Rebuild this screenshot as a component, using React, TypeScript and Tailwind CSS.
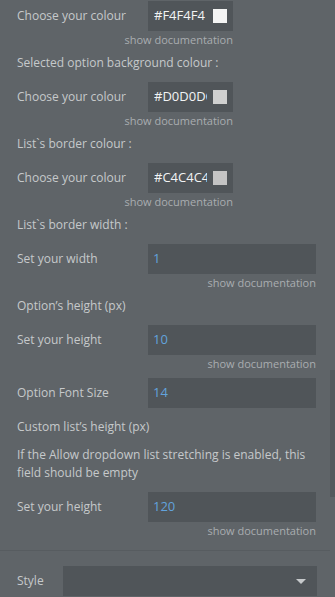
import React from 'react';

type Row = { label: string; value: string };

const Doc: React.FC = () => (
  <div className="h-[18px] text-right text-[11px] leading-[18px] text-[#a9adb0]">show documentation</div>
);

const ColourField: React.FC<{ label: string; hex: string; swatch: string }> = ({ label, hex, swatch }) => (
  <div className="w-[233px]">
    <div className="flex h-[30px] items-center">
      <div className="w-[148px] pl-[17px] text-[12px] text-[#c6c9cb]">{label}</div>
      <div className="flex h-[30px] w-[85px] items-center bg-[#505559] pl-[6px]">
        <div className="w-[53px] overflow-hidden whitespace-nowrap text-[13px] text-[#f2f3f4]">{hex}</div>
        <div className={`ml-[6px] h-[14px] w-[14px] ${swatch}`} />
      </div>
    </div>
    <Doc />
  </div>
);

const NumberField: React.FC<Row & { doc?: boolean }> = ({ label, value, doc = true }) => (
  <div className="w-[316px]">
    <div className="flex h-[30px] items-center">
      <div className="w-[148px] pl-[17px] text-[12px] text-[#c6c9cb]">{label}</div>
      <div className="flex h-[30px] flex-1 items-center bg-[#505559] pl-[5px] text-[13px] text-[#62a3dc]">
        {value}
      </div>
    </div>
    {doc && <Doc />}
  </div>
);

const Heading: React.FC<{ children: React.ReactNode; className?: string }> = ({ children, className }) => (
  <div className={`pl-[17px] text-[12px] leading-[20px] text-[#c6c9cb] ${className ?? ''}`}>{children}</div>
);

export default function App() {
  return (
    <div
      className="relative h-[597px] w-[335px] overflow-hidden bg-[#5f6468] pt-px"
      style={{ fontFamily: '"Open Sans", "Noto Sans", sans-serif' }}
    >
      <ColourField label="Choose your colour" hex="#F4F4F4" swatch="bg-[#f4f4f4]" />
      <Heading className="mb-[9px] mt-[4px]">Selected option background colour :</Heading>
      <ColourField label="Choose your colour" hex="#D0D0DC" swatch="bg-[#d0d0d0]" />
      <Heading className="mb-[9px] mt-[4px]">List`s border colour :</Heading>
      <ColourField label="Choose your colour" hex="#C4C4C4" swatch="bg-[#c4c4c4]" />
      <Heading className="mb-[9px] mt-[4px]">List`s border width :</Heading>
      <NumberField label="Set your width" value="1" />
      <Heading className="mb-[9px] mt-[4px]">Option’s height (px)</Heading>
      <NumberField label="Set your height" value="10" />
      <div className="mt-[5px]">
        <NumberField label="Option Font Size" value="14" doc={false} />
      </div>
      <Heading className="mt-[9px]">Custom list’s height (px)</Heading>
      <div className="mb-[10px] mt-[9px] pl-[17px] text-[12px] leading-[18px] text-[#c6c9cb]">
        If the Allow dropdown list stretching is enabled, this
        <br />
        field should be empty
      </div>
      <NumberField label="Set your height" value="120" />

      <div className="mt-[10px] h-px w-[330px] bg-[#575c60]" />

      <div className="mt-[15px] flex h-[30px] items-center">
        <div className="w-[63px] pl-[17px] text-[12px] text-[#c6c9cb]">Style</div>
        <div className="flex h-[30px] w-[254px] items-center justify-end bg-[#505559] pr-[11px]">
          <div className="h-0 w-0 border-x-[5px] border-t-[5px] border-x-transparent border-t-[#c6c9cb]" />
        </div>
      </div>

      <div className="absolute right-0 top-[370px] h-[127px] w-[5px] bg-[#54595d]" />
    </div>
  );
}
